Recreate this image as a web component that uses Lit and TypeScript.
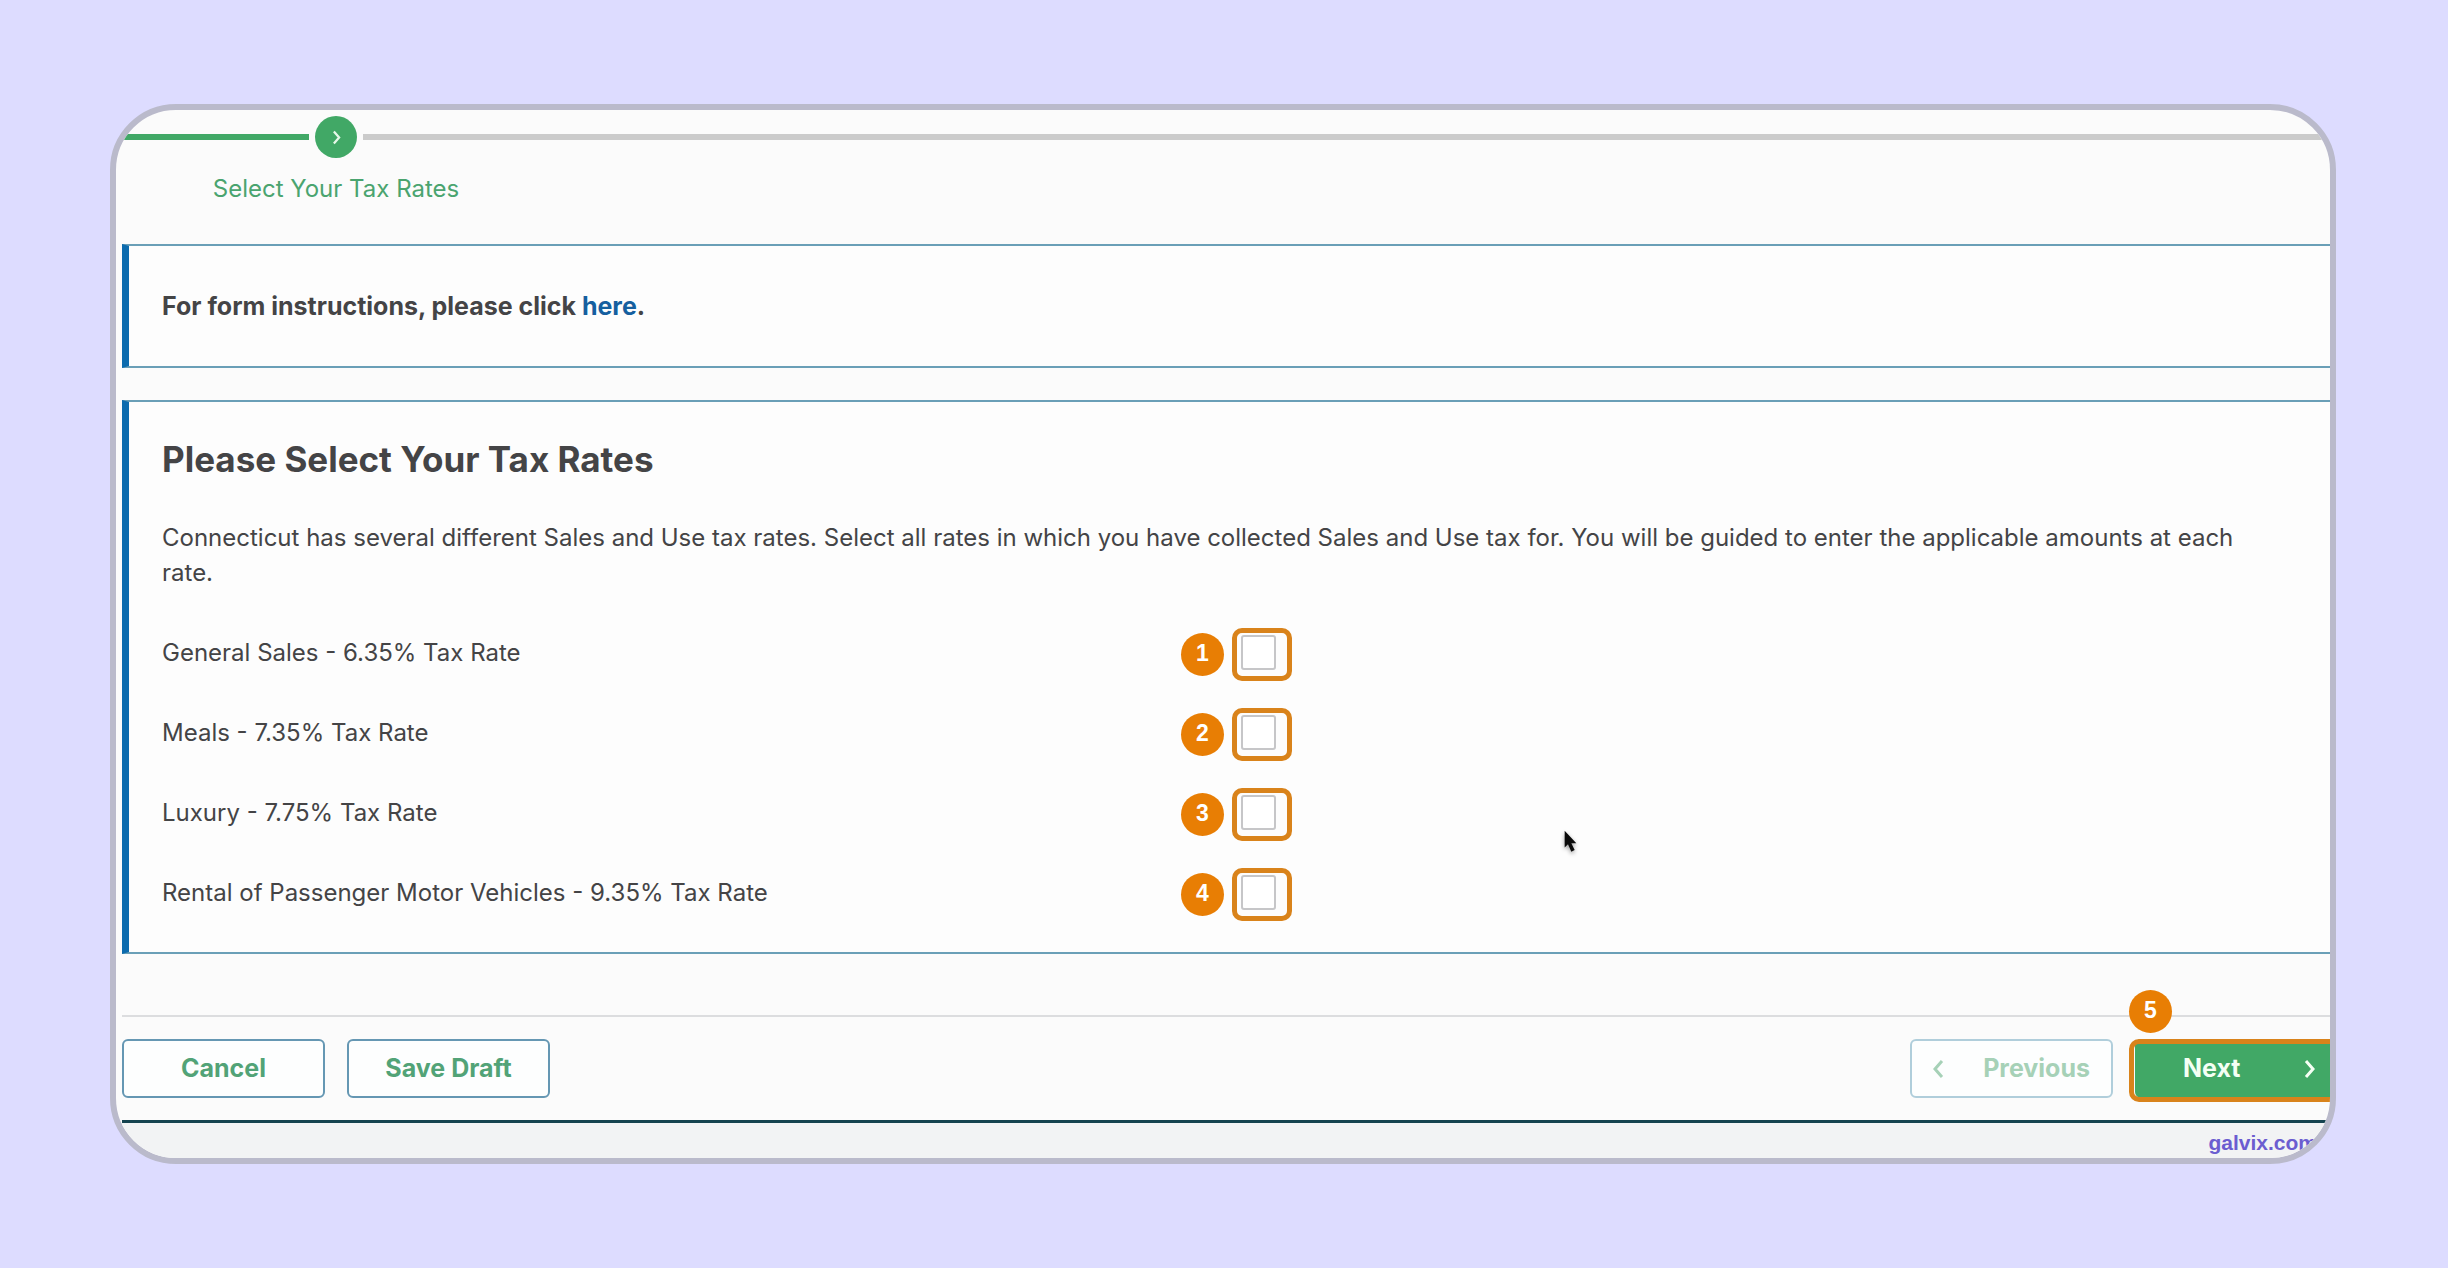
import { LitElement, html, css, svg } from "lit";
import { customElement, property } from "lit/decorators.js";

interface TaxRate {
  id: string;
  label: string;
}

const RATES: TaxRate[] = [
  { id: "general", label: "General Sales - 6.35% Tax Rate" },
  { id: "meals", label: "Meals - 7.35% Tax Rate" },
  { id: "luxury", label: "Luxury - 7.75% Tax Rate" },
  { id: "rental", label: "Rental of Passenger Motor Vehicles - 9.35% Tax Rate" },
];

const chevronRight = svg`<path d="M2 2 L9 10 L2 18" />`;
const chevronLeft = svg`<path d="M9 2 L2 10 L9 18" />`;

@customElement("rate-row")
export class RateRow extends LitElement {
  @property() label = "";
  @property() name = "";
  @property({ type: Number }) step = 1;

  static styles = css`
    :host {
      display: grid;
      grid-template-columns: 1fr 1fr;
      column-gap: 18px;
      align-items: center;
      height: 80px;
    }
    .field {
      position: relative;
      display: flex;
      width: 35px;
      height: 35px;
    }
    .box {
      appearance: none;
      box-sizing: border-box;
      width: 35px;
      height: 35px;
      margin: 0;
      border: 2px solid #c6c6c8;
      border-radius: 3px;
      background: #ffffff;
    }
    .box:checked {
      background: #41a866;
    }
    .ring {
      position: absolute;
      left: -9px;
      top: -7px;
      box-sizing: border-box;
      width: 60px;
      height: 53px;
      border: 5px solid #d9831b;
      border-radius: 10px;
      pointer-events: none;
    }
    .badge {
      position: absolute;
      left: -60px;
      top: -2px;
      width: 43px;
      height: 43px;
      border-radius: 50%;
      background: #e87e04;
      color: #ffffff;
      font: bold 23px/40px "Liberation Sans", Arial, sans-serif;
      text-align: center;
    }
  `;

  render() {
    return html`
      <label for=${this.name}>${this.label}</label>
      <div class="field">
        <input class="box" type="checkbox" id=${this.name} name=${this.name} />
        <span class="ring"></span>
        <span class="badge">${this.step}</span>
      </div>
    `;
  }
}

@customElement("app-root")
export class AppRoot extends LitElement {
  static styles = css`
    :host {
      display: block;
      box-sizing: border-box;
      min-height: 100vh;
      padding: 104px 112px 104px 110px;
      background: #dddcff;
      color: #444446;
      font: 24px/35px Inter, "Liberation Sans", sans-serif;
    }
    .frame {
      position: relative;
      overflow: hidden;
      border: 6px solid #babacb;
      border-radius: 66px;
      background: #fbfbfb;
    }
    .track {
      display: flex;
      align-items: center;
      gap: 6px;
      padding-top: 6px;
    }
    .done {
      width: 193px;
      height: 6px;
      background: #41a866;
    }
    .todo {
      flex: 1;
      height: 6px;
      background: #cbcbcb;
    }
    .dot {
      display: flex;
      align-items: center;
      justify-content: center;
      width: 42px;
      height: 42px;
      border-radius: 50%;
      background: #41a866;
    }
    svg {
      display: block;
      fill: none;
      stroke: currentColor;
      stroke-width: 3;
    }
    .dot svg {
      width: 9px;
      height: 15px;
      color: #e6f8e8;
    }
    .step-name {
      width: 440px;
      padding: 13px 0 38px;
      text-align: center;
      color: #4aa46f;
    }
    .content {
      margin: 0 -8px 0 6px;
    }
    .card {
      border: 2px solid #6a9fb7;
      border-left: 7px solid #0c6bae;
      background: #fdfdfd;
      padding: 0 34px 0 33px;
    }
    .notice {
      margin: 0 0 32px;
      padding-top: 43px;
      padding-bottom: 42px;
      font-size: 25px;
      font-weight: 700;
    }
    a {
      color: #155f9f;
      text-decoration: none;
    }
    .rates {
      padding-top: 35px;
      padding-bottom: 20px;
    }
    h1 {
      margin: 0 0 39px;
      font-size: 35px;
      line-height: 44px;
      font-weight: 700;
    }
    .intro {
      margin: 0 0 22px;
      padding-right: 34px;
    }
    .actions {
      display: flex;
      gap: 22px;
      margin-top: 61px;
      padding: 22px 0;
      border-top: 2px solid #dcdddf;
    }
    .spacer {
      flex: 1;
    }
    .btn {
      box-sizing: border-box;
      display: flex;
      align-items: center;
      justify-content: center;
      width: 203px;
      height: 59px;
      padding: 0;
      border: 2px solid #6597b3;
      border-radius: 6px;
      background: #fdfefe;
      color: #52a377;
      font: inherit;
      font-size: 25px;
      font-weight: 700;
    }
    .btn svg {
      width: 11px;
      height: 20px;
    }
    .prev {
      justify-content: space-between;
      padding: 0 21px;
      border-color: #b0cedb;
      color: #a6d1b7;
    }
    .next-wrap {
      position: relative;
    }
    .next {
      justify-content: space-between;
      padding: 0 21px 0 46px;
      border-color: #41a866;
      background: #41a866;
      color: #f4fff4;
    }
    .ring {
      position: absolute;
      left: -6px;
      top: 0;
      box-sizing: border-box;
      width: 240px;
      height: 63px;
      border: 5px solid #d9831b;
      border-radius: 10px;
      pointer-events: none;
    }
    .badge {
      position: absolute;
      left: -6px;
      top: -49px;
      width: 43px;
      height: 43px;
      border-radius: 50%;
      background: #e87e04;
      color: #ffffff;
      font: bold 23px/40px "Liberation Sans", Arial, sans-serif;
      text-align: center;
    }
    .foot {
      height: 35px;
      margin-left: 6px;
      padding-right: 13px;
      border-top: 3px solid #15434f;
      background: #f2f3f4;
      text-align: right;
      font: bold 21px/39px "Liberation Sans", Arial, sans-serif;
    }
    .foot a {
      color: #6b5dd0;
    }
    .pointer {
      position: absolute;
      left: 1447px;
      top: 720px;
      width: 20px;
      height: 25px;
      stroke: none;
      filter: drop-shadow(0 2px 2px rgba(0, 0, 0, 0.4));
    }
  `;

  render() {
    return html`
      <main class="frame">
        <div class="track">
          <span class="done"></span>
          <span class="dot">
            <svg viewBox="0 0 11 20" aria-hidden="true">${chevronRight}</svg>
          </span>
          <span class="todo"></span>
        </div>
        <div class="step-name">Select Your Tax Rates</div>

        <div class="content">
          <p class="card notice">For form instructions, please click <a href="#instructions">here</a>.</p>

          <section class="card rates">
            <h1>Please Select Your Tax Rates</h1>
            <p class="intro">
              Connecticut has several different Sales and Use tax rates. Select all rates in which you have
              collected Sales and Use tax for. You will be guided to enter the applicable amounts at each rate.
            </p>
            ${RATES.map(
              (rate, i) => html`<rate-row .label=${rate.label} .name=${rate.id} .step=${i + 1}></rate-row>`
            )}
          </section>

          <div class="actions">
            <button class="btn" type="button">Cancel</button>
            <button class="btn" type="button">Save Draft</button>
            <span class="spacer"></span>
            <button class="btn prev" type="button">
              <svg viewBox="0 0 11 20" aria-hidden="true">${chevronLeft}</svg>
              Previous
            </button>
            <div class="next-wrap">
              <button class="btn next" type="button">
                Next
                <svg viewBox="0 0 11 20" aria-hidden="true">${chevronRight}</svg>
              </button>
              <span class="ring"></span>
              <span class="badge">5</span>
            </div>
          </div>
        </div>

        <footer class="foot"><a href="#home">galvix.com</a></footer>

        <svg class="pointer" viewBox="0 0 24 30" aria-hidden="true">
          <path
            d="M2 1 V21 L6 17 L10 26 L14 24 L10 16 H16 Z"
            fill="#0a0a0a"
          />
        </svg>
      </main>
    `;
  }
}
